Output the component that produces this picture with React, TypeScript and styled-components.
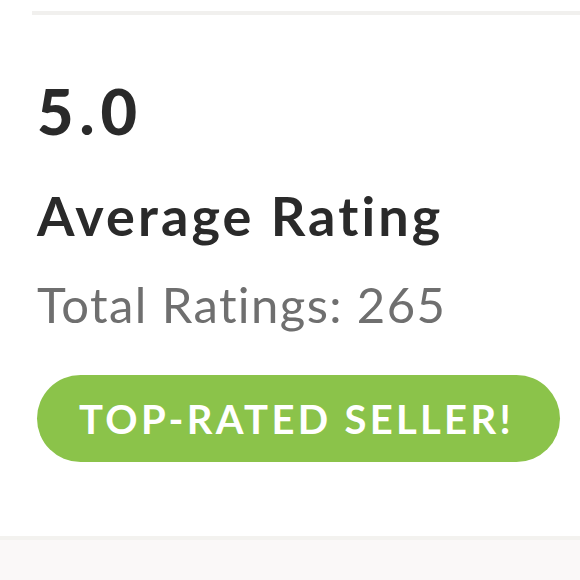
import React from "react";
import styled, { createGlobalStyle } from "styled-components";

const GlobalStyle = createGlobalStyle`
  html, body { margin: 0; padding: 0; background: #ffffff; }
  body { font-family: Lato, "Noto Sans", sans-serif; }
`;

const Page = styled.div`
  width: 580px;
  height: 580px;
  display: flex;
  flex-direction: column;
  background: #ffffff;
  overflow: hidden;
`;

const TopRule = styled.div`
  margin: 11px 0 0 32px;
  height: 4px;
  background: #f1f0ee;
`;

const Content = styled.section`
  display: flex;
  flex-direction: column;
  align-items: flex-start;
  padding: 0 20px 0 37px;
`;

const Score = styled.div`
  margin-top: 64px;
  font-size: 63px;
  font-weight: 900;
  line-height: 1;
  letter-spacing: 6px;
  color: #2a2a2a;
`;

const Title = styled.h2`
  margin: 47px 0 0;
  font-size: 54px;
  font-weight: 700;
  line-height: 1;
  letter-spacing: 3.1px;
  color: #2a2a2a;
`;

const Subtitle = styled.p`
  margin: 37px 0 0;
  font-size: 49px;
  font-weight: 400;
  line-height: 1;
  letter-spacing: 1.4px;
  color: #6f6f6f;
`;

const Badge = styled.div`
  margin-top: 46px;
  width: 523px;
  height: 87px;
  border-radius: 44px;
  background: #8bc34a;
  color: #ffffff;
  display: flex;
  align-items: center;
  justify-content: center;
  padding-right: 4px;
  box-sizing: border-box;
  font-size: 40px;
  font-weight: 700;
  letter-spacing: 3.3px;
  text-transform: uppercase;
`;

const Footer = styled.footer`
  margin-top: auto;
  height: 40px;
  border-top: 4px solid #f3f2ef;
  background: #faf8f8;
`;

export default function App() {
  return (
    <Page>
      <GlobalStyle />
      <TopRule />
      <Content>
        <Score>5.0</Score>
        <Title>Average Rating</Title>
        <Subtitle>Total Ratings: 265</Subtitle>
        <Badge>Top-Rated Seller!</Badge>
      </Content>
      <Footer />
    </Page>
  );
}
